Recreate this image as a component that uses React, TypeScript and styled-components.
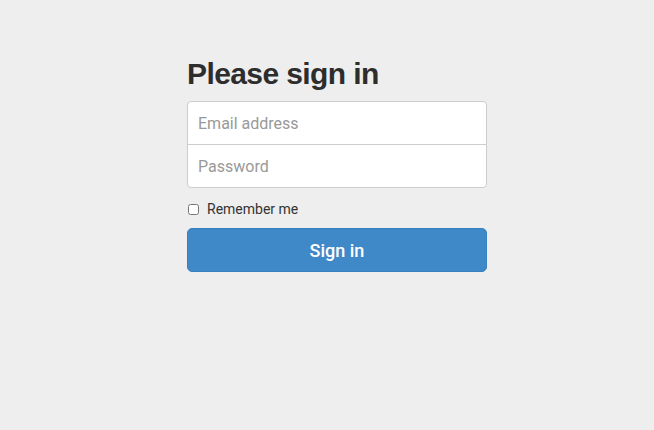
import React from "react";
import styled, { createGlobalStyle } from "styled-components";

const Global = createGlobalStyle`
  html, body { margin: 0; padding: 0; background: #eeeeee; }
  body { font-family: Roboto, "Liberation Sans", sans-serif; color: #333; }
  * { box-sizing: border-box; }
`;

const Page = styled.div`
  width: 654px;
  height: 430px;
  background: #eeeeee;
  padding: 57px 0 0 187px;
`;

const Form = styled.form`
  width: 300px;
  display: flex;
  flex-direction: column;
`;

const Heading = styled.h2`
  margin: 0 0 11px;
  font-family: "Liberation Sans", Arial, sans-serif;
  font-size: 30px;
  font-weight: 700;
  line-height: 33px;
  color: #2d2d2d;
  letter-spacing: -0.6px;
`;

const Field = styled.input<{ $pos: "top" | "bottom" }>`
  display: block;
  width: 100%;
  height: 44px;
  margin: ${(p) => (p.$pos === "top" ? "0 0 -1px" : "0")};
  padding: 10px;
  font-family: Roboto, "Liberation Sans", sans-serif;
  font-size: 16px;
  color: #555;
  background: #fff;
  border: 1px solid #ccc;
  border-radius: ${(p) => (p.$pos === "top" ? "4px 4px 0 0" : "0 0 4px 4px")};
  outline: none;
  caret-color: #333;
  &::placeholder { color: #999; }
`;

const CheckRow = styled.label`
  display: flex;
  align-items: center;
  gap: 8px;
  margin: 13px 0 11px;
  font-size: 14px;
  color: #333;
  height: 16px;
`;

const Check = styled.input`
  margin: 0 0 0 1px;
  width: 11px;
  height: 11px;
`;

const Button = styled.button`
  height: 44px;
  width: 100%;
  border: 1px solid #3a7fbe;
  border-radius: 5px;
  background: #3f89c9;
  color: #fff;
  font-family: Roboto, "Liberation Sans", sans-serif;
  font-size: 18px;
  font-weight: 500;
  cursor: pointer;
`;

export default function App() {
  return (
    <>
      <Global />
      <Page>
        <Form onSubmit={(e) => e.preventDefault()}>
          <Heading>Please sign in</Heading>
          <Field $pos="top" type="email" placeholder="Email address" autoFocus />
          <Field $pos="bottom" type="password" placeholder="Password" />
          <CheckRow>
            <Check type="checkbox" />
            Remember me
          </CheckRow>
          <Button type="submit">Sign in</Button>
        </Form>
      </Page>
    </>
  );
}
